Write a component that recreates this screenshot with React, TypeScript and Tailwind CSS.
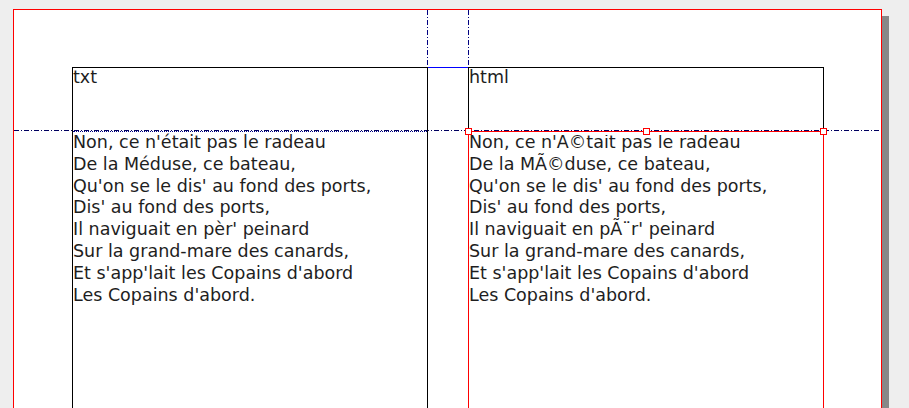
import React from "react";

const leftLines = [
  "Non, ce n'était pas le radeau",
  "De la Méduse, ce bateau,",
  "Qu'on se le dis' au fond des ports,",
  "Dis' au fond des ports,",
  "Il naviguait en pèr' peinard",
  "Sur la grand-mare des canards,",
  "Et s'app'lait les Copains d'abord",
  "Les Copains d'abord.",
];

const rightLines = [
  "Non, ce n'Ã©tait pas le radeau",
  "De la MÃ©duse, ce bateau,",
  "Qu'on se le dis' au fond des ports,",
  "Dis' au fond des ports,",
  "Il naviguait en pÃ¨r' peinard",
  "Sur la grand-mare des canards,",
  "Et s'app'lait les Copains d'abord",
  "Les Copains d'abord.",
];

const vDash =
  "bg-[repeating-linear-gradient(to_bottom,#000080_0px,#000080_5px,transparent_5px,transparent_7px,#000080_7px,#000080_8px,transparent_8px,transparent_10px)]";
const hDash =
  "bg-[repeating-linear-gradient(to_right,#000060_0px,#000060_5px,transparent_5px,transparent_7px,#000060_7px,#000060_8px,transparent_8px,transparent_10px)]";

function Handle({ className }: { className: string }) {
  return (
    <div
      className={`absolute z-10 w-[7px] h-[7px] bg-white border border-[#ff0000] ${className}`}
    />
  );
}

export default function App() {
  return (
    <div className="w-[909px] h-[408px] overflow-hidden bg-[#eeeeee] pl-[13px] pt-[9px] font-['DejaVu_Sans',sans-serif] text-[#1e1e1e]">
      <div className="relative w-[869px] h-[620px] bg-white border border-[#ff0000] shadow-[7px_7px_0_0_#888888]">
        {/* guides */}
        <div className={`absolute left-[413px] top-0 w-px h-full ${vDash}`} />
        <div className={`absolute left-[454px] top-0 w-px h-full ${vDash}`} />
        <div className={`absolute left-0 top-[120px] w-full h-px ${hDash}`} />
        <div className="absolute left-[414px] top-[57px] w-[40px] h-px bg-[#0000ff]" />

        {/* frames */}
        <div className="relative flex gap-[40px] pl-[58px] pt-[57px]">
          <div className="w-[356px] flex flex-col">
            <div className="h-[64px] border-t border-x border-black">
              <div className="text-[17.5px] leading-[19px]">txt</div>
            </div>
            <div className="h-[460px] border-x border-black flex flex-col">
              <div className="h-px border-t border-dotted border-[#000080]" />
              <div className="text-[17.5px] leading-[21.8px] whitespace-nowrap">
                {leftLines.map((l, i) => (
                  <div key={i}>{l}</div>
                ))}
              </div>
            </div>
          </div>

          <div className="w-[356px] flex flex-col">
            <div className="h-[64px] border-t border-x border-black">
              <div className="text-[17.5px] leading-[19px]">html</div>
            </div>
            <div className="h-[460px] border-x border-t border-[#ff0000] flex flex-col">
              <div className="text-[17.5px] leading-[21.8px] whitespace-nowrap [clip-path:inset(3px_0_0_0)]">
                {rightLines.map((l, i) => (
                  <div key={i}>{l}</div>
                ))}
              </div>
            </div>
          </div>
        </div>

        {/* selection handles */}
        <Handle className="left-[451px] top-[118px]" />
        <Handle className="left-[629px] top-[118px]" />
        <Handle className="left-[806px] top-[118px]" />
      </div>
    </div>
  );
}
